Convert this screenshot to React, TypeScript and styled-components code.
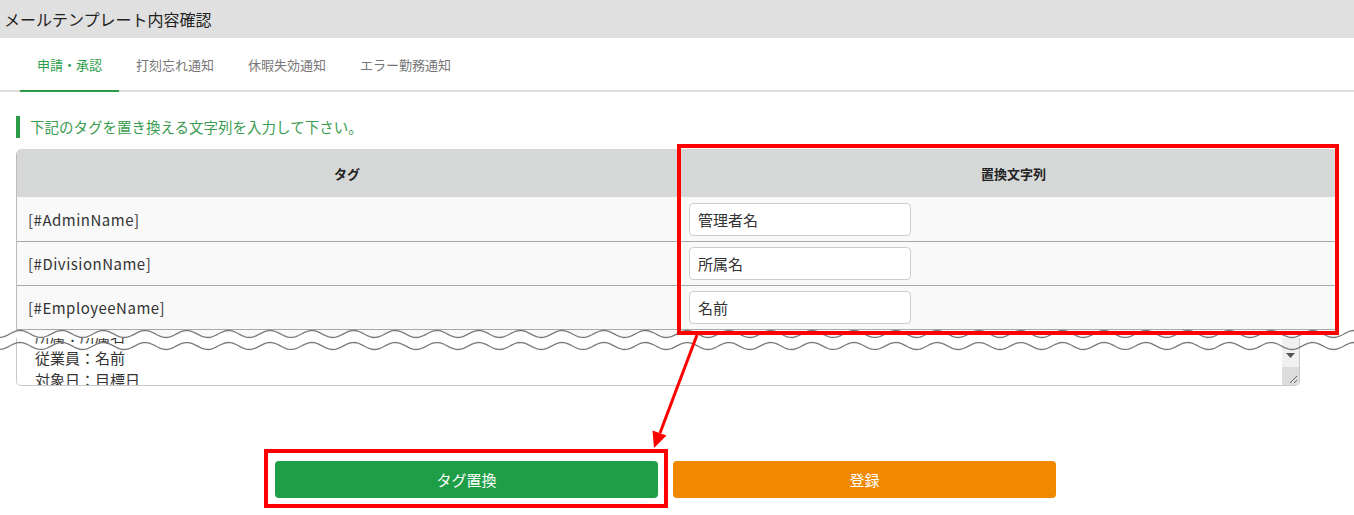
import React from 'react'
import styled, { createGlobalStyle } from 'styled-components'

const rows = [
  { tag: '[#AdminName]', value: '管理者名' },
  { tag: '[#DivisionName]', value: '所属名' },
  { tag: '[#EmployeeName]', value: '名前' },
]

const tabs = ['申請・承認', '打刻忘れ通知', '休暇失効通知', 'エラー勤務通知']

const wave = (center: number, amp: number, period: number, width: number) => {
  let d = ''
  for (let x = 0; x <= width; x += 2) {
    const y = center - amp * Math.cos((2 * Math.PI * (x - 20)) / period)
    d += (x === 0 ? 'M' : 'L') + x + ',' + y.toFixed(2) + ' '
  }
  return d
}

const App = () => {
  const upper = wave(8, 3.5, 41.7, 1354)
  const lower = wave(20, 3.5, 41.7, 1354)

  return (
    <Page>
      <GlobalStyle />
      <Header>メールテンプレート内容確認</Header>
      <Tabs>
        {tabs.map((t, i) => (
          <Tab key={t} active={i === 0}>{t}</Tab>
        ))}
      </Tabs>
      <Main>
        <Notice>下記のタグを置き換える文字列を入力して下さい。</Notice>
        <Table>
          <HeadRow>
            <HeadCell>タグ</HeadCell>
            <HeadCell shift>置換文字列</HeadCell>
          </HeadRow>
          {rows.map((r, i) => (
            <Row key={r.tag} first={i === 0}>
              <TagCell>{r.tag}</TagCell>
              <InputCell>
                <Input defaultValue={r.value} />
              </InputCell>
            </Row>
          ))}
          <StubRow />
        </Table>
        <TextBox>
          <TextContent>
            <div>所属：所属名</div>
            <div>従業員：名前</div>
            <div>対象日：目標日</div>
          </TextContent>
          <Scrollbar>
            <ArrowPart>
              <svg width="9" height="5" viewBox="0 0 9 5">
                <polygon points="0,0 9,0 4.5,5" fill="#555" />
              </svg>
            </ArrowPart>
            <GripPart>
              <svg width="9" height="9" viewBox="0 0 9 9">
                <line x1="2" y1="9" x2="9" y2="2" stroke="#666" strokeWidth="1" />
                <line x1="6" y1="9" x2="9" y2="6" stroke="#666" strokeWidth="1" />
              </svg>
            </GripPart>
          </Scrollbar>
        </TextBox>
      </Main>
      <Buttons>
        <Button color="#1f9e48">タグ置換</Button>
        <Button color="#f08800">登録</Button>
      </Buttons>

      <Cut width="1354" height="30" viewBox="0 0 1354 30">
        <path d={upper + ' L1354,12 L0,12 Z'} fill="#fff" />
        <path d={upper} fill="none" stroke="#7a7a7a" strokeWidth="1.3" />
        <path d={lower} fill="none" stroke="#7a7a7a" strokeWidth="1.3" />
      </Cut>

      <RedBox style={{ left: 677, top: 144, width: 662, height: 191 }} />
      <RedBox style={{ left: 264, top: 449, width: 404, height: 59 }} />
      <Arrow width="1354" height="515" viewBox="0 0 1354 515">
        <line x1="697" y1="335" x2="660" y2="433" stroke="#f00" strokeWidth="3" />
        <polygon points="654,448 666.5,435.5 652.5,430.5" fill="#f00" />
      </Arrow>
    </Page>
  )
}

export default App

const GlobalStyle = createGlobalStyle`
  html, body {
    margin: 0;
    padding: 0;
    background: #fff;
  }
  body {
    font-family: "Noto Sans CJK JP", "Noto Sans", sans-serif;
    color: #333;
  }
  * {
    box-sizing: border-box;
  }
`
const Page = styled.div`
  position: relative;
  width: 1354px;
  height: 515px;
  overflow: hidden;
`
const Header = styled.div`
  height: 38px;
  background: #e0e0e0;
  padding-left: 4px;
  display: flex;
  align-items: center;
  font-size: 16px;
  color: #222;
`
const Tabs = styled.div`
  height: 54px;
  display: flex;
  padding-left: 20px;
  border-bottom: 2px solid #dcdcdc;
`
const Tab = styled.div<{ active?: boolean }>`
  display: flex;
  align-items: center;
  padding: 0 17px;
  margin-bottom: -2px;
  font-size: 13px;
  color: ${(p) => (p.active ? '#2c9b48' : '#777')};
  border-bottom: 2px solid ${(p) => (p.active ? '#2c9b48' : 'transparent')};
`
const Main = styled.div`
  padding: 0 16px;
`
const Notice = styled.div`
  margin-top: 24px;
  height: 22px;
  line-height: 22px;
  border-left: 4px solid #2c9b48;
  padding-left: 10px;
  font-size: 14.5px;
  color: #3a9c4f;
`
const Table = styled.div`
  margin-top: 11px;
  width: 1322px;
  border-left: 1px solid #bbb;
  border-top-left-radius: 6px;
  overflow: hidden;
`
const HeadRow = styled.div`
  display: grid;
  grid-template-columns: 660px 1fr;
  height: 48px;
  background: #d6d8d8;
`
const HeadCell = styled.div<{ shift?: boolean }>`
  display: flex;
  align-items: center;
  justify-content: center;
  padding-left: ${(p) => (p.shift ? '12px' : '0')};
  font-size: 13px;
  font-weight: bold;
  color: #222;
`
const Row = styled.div<{ first?: boolean }>`
  display: grid;
  grid-template-columns: 660px 1fr;
  height: 44px;
  background: #f9f9f9;
  border-top: ${(p) => (p.first ? 'none' : '1px solid #a8a8a8')};
`
const StubRow = styled.div`
  height: 8px;
  background: #f9f9f9;
  border-top: 1px solid #a8a8a8;
`
const TagCell = styled.div`
  display: flex;
  align-items: center;
  padding-left: 11px;
  font-size: 15px;
  letter-spacing: 0.5px;
  color: #333;
`
const InputCell = styled.div`
  display: flex;
  align-items: center;
  padding-left: 12px;
`
const Input = styled.input`
  width: 222px;
  height: 33px;
  border: 1px solid #ccc;
  border-radius: 4px;
  padding: 0 8px;
  font-family: inherit;
  font-size: 15px;
  color: #333;
  background: #fff;
  outline: none;
`
const TextBox = styled.div`
  width: 1284px;
  height: 49px;
  display: flex;
  border: 1px solid #c8c8c8;
  border-top: none;
  border-radius: 0 0 5px 5px;
  background: #fff;
  overflow: hidden;
`
const TextContent = styled.div`
  flex: 1;
  overflow: hidden;
  padding-left: 18px;
  font-size: 15px;
  line-height: 22px;
  color: #333;
  margin-top: -12px;
`
const Scrollbar = styled.div`
  width: 17px;
  display: flex;
  flex-direction: column;
  background: #f0f0f0;
`
const ArrowPart = styled.div`
  height: 30px;
  display: flex;
  align-items: flex-end;
  justify-content: center;
  padding-bottom: 9px;
`
const GripPart = styled.div`
  flex: 1;
  background: #dcdcdc;
  display: flex;
  align-items: flex-end;
  justify-content: flex-end;
  padding: 0 2px 2px 0;
`
const Buttons = styled.div`
  margin-top: 75px;
  padding-left: 275px;
  display: flex;
  gap: 15px;
`
const Button = styled.button<{ color: string }>`
  width: 383px;
  height: 37px;
  border: none;
  border-radius: 4px;
  background: ${(p) => p.color};
  color: #fff;
  font-family: inherit;
  font-size: 15px;
`
const Cut = styled.svg`
  position: absolute;
  left: 0;
  top: 326px;
`
const RedBox = styled.div`
  position: absolute;
  border: 4px solid #f00;
  pointer-events: none;
`
const Arrow = styled.svg`
  position: absolute;
  left: 0;
  top: 0;
  pointer-events: none;
`
